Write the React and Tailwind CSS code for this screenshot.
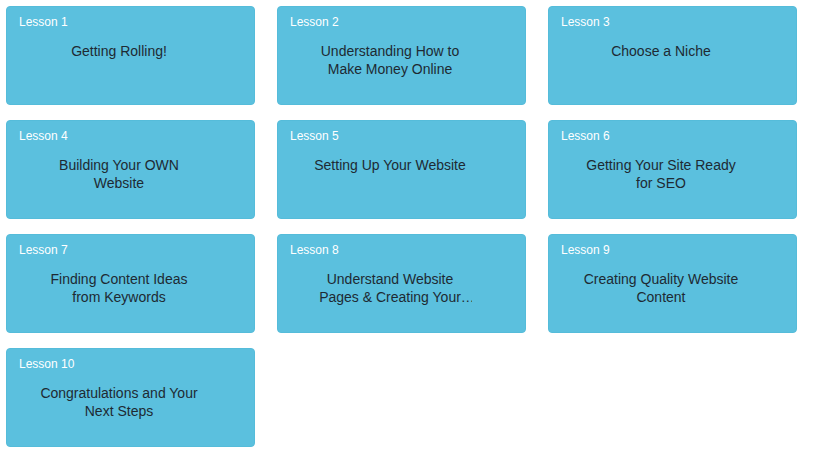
const lessons = [
  'Getting Rolling!',
  'Understanding How to Make Money Online',
  'Choose a Niche',
  'Building Your OWN Website',
  'Setting Up Your Website',
  'Getting Your Site Ready for SEO',
  'Finding Content Ideas from Keywords',
  'Understand Website Pages & Creating Your Content Structure',
  'Creating Quality Website Content',
  'Congratulations and Your Next Steps',
];

function LessonCard({ num, title }) {
  return (
    <div className="h-[99px] rounded-[4px] border border-[#55bcda] bg-[#5bc0de] px-[12px] pt-[6px]">
      <p className="text-[12px] leading-[18px] text-white">Lesson {num}</p>
      <p className="mt-[11px] ml-[18px] line-clamp-2 w-[164px] text-center text-[14px] leading-[18px] text-[#1e2a33]">
        {title}
      </p>
    </div>
  );
}

export default function App() {
  return (
    <div className="min-h-[465px] bg-white p-[6px] font-['Liberation_Sans',Arial,sans-serif]">
      <div className="grid grid-cols-[249px_249px_249px] gap-x-[22px] gap-y-[15px]">
        {lessons.map((title, i) => (
          <LessonCard key={i} num={i + 1} title={title} />
        ))}
      </div>
    </div>
  );
}
